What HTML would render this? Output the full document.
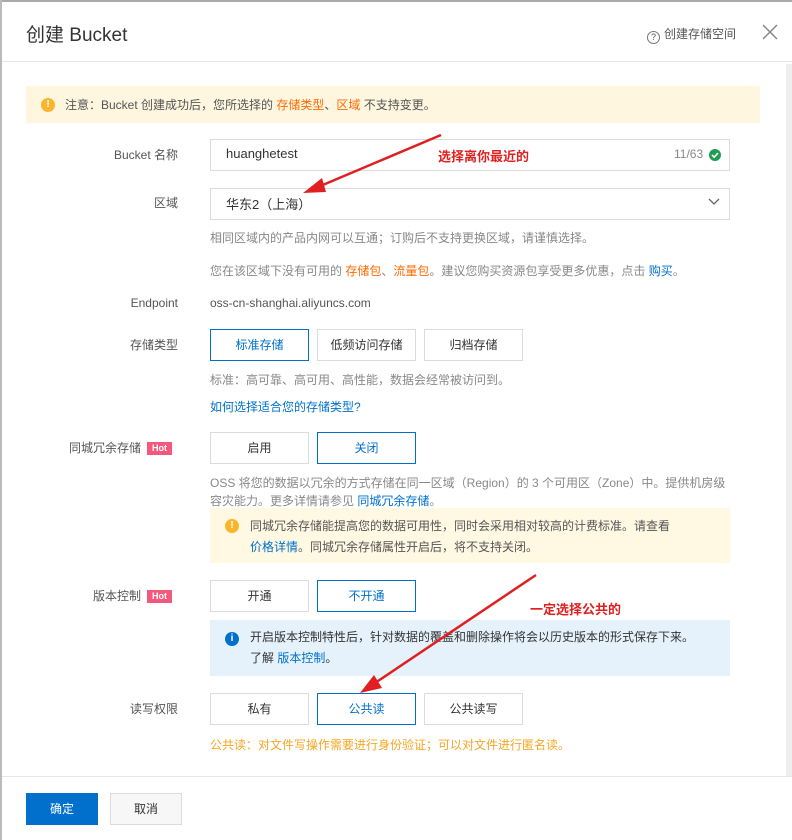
<!DOCTYPE html>
<html><head><meta charset="utf-8"><style>
*{box-sizing:border-box;margin:0;padding:0}
body{width:792px;height:840px;background:#fff;font-family:"Liberation Sans","Noto Sans CJK SC",sans-serif;font-size:12px;color:#333;position:relative;overflow:hidden}
.a{position:absolute}
.lbl{position:absolute;right:614px;text-align:right;color:#555;font-size:12px;white-space:nowrap}
.btn{position:absolute;width:99px;height:32px;border:1px solid #dcdcdc;text-align:center;line-height:30px;color:#333;background:#fff}
.sel{border-color:#0070cc;color:#0070cc}
.hint{position:absolute;left:210px;color:#888;font-size:12px;white-space:nowrap}
.o{color:#ff6a00}.b{color:#0070cc}
.hot{display:inline-block;background:#f5587b;color:#fff;font-size:9px;font-weight:bold;padding:0 5px;height:13px;line-height:13px;margin-left:6px;vertical-align:1px}
</style></head><body>
<div class="a" style="left:0;top:0;width:792px;height:2px;background:#aaa"></div>
<div class="a" style="left:0;top:0;width:2px;height:840px;background:#bbb"></div>
<div class="a" style="left:26px;top:20px;font-size:19px;color:#333">创建 Bucket</div>
<div class="a" style="left:647px;top:25px;font-size:12px;color:#555"><span style="display:inline-block;width:13px;height:13px;border:1px solid #777;border-radius:50%;font-size:9px;line-height:11px;text-align:center;margin-right:4px;vertical-align:-2px">?</span>创建存储空间</div>
<svg class="a" style="left:762px;top:24px" width="16" height="16"><path d="M1 1L15 15M15 1L1 15" stroke="#888" stroke-width="1.5"/></svg>
<div class="a" style="left:2px;top:61px;width:790px;height:1px;background:#e5e5e5"></div>
<div class="a" style="left:786px;top:64px;width:6px;height:712px;background:#eee"></div>
<div class="a" style="left:26px;top:86px;width:734px;height:37px;background:#fff6e0"></div>
<div class="a" style="left:41px;top:98px;width:14px;height:14px;border-radius:50%;background:#f8b62d;color:#fff;font-size:10px;font-weight:bold;text-align:center;line-height:14px">!</div>
<div class="a" style="left:65px;top:96px;color:#555">注意：Bucket 创建成功后，您所选择的 <span class="o">存储类型</span>、<span class="o">区域</span> 不支持变更。</div>

<div class="lbl" style="top:146px">Bucket 名称</div>
<div class="a" style="left:210px;top:139px;width:520px;height:32px;border:1px solid #dcdcdc"></div>
<div class="a" style="left:226px;top:146px;font-size:13px;color:#333">huanghetest</div>
<div class="a" style="left:674px;top:147px;color:#888">11/63</div>
<div class="a" style="left:709px;top:149px;width:12px;height:12px;border-radius:50%;background:#1e9e50"></div>
<svg class="a" style="left:709px;top:149px" width="12" height="12"><path d="M3 6L5.2 8.2L9 4" stroke="#fff" stroke-width="1.6" fill="none"/></svg>
<div class="a" style="left:438px;top:146px;color:#e02020;font-weight:bold;font-size:13px">选择离你最近的</div>

<div class="lbl" style="top:194px">区域</div>
<div class="a" style="left:210px;top:188px;width:520px;height:32px;border:1px solid #dcdcdc"></div>
<div class="a" style="left:226px;top:194px;font-size:13px">华东2（上海）</div>
<svg class="a" style="left:708px;top:198px" width="12" height="8"><path d="M1 1L6 6L11 1" stroke="#666" stroke-width="1.3" fill="none"/></svg>
<div class="hint" style="top:229px">相同区域内的产品内网可以互通；订购后不支持更换区域，请谨慎选择。</div>
<div class="hint" style="top:262px">您在该区域下没有可用的 <span class="o">存储包</span>、<span class="o">流量包</span>。建议您购买资源包享受更多优惠，点击 <span class="b">购买</span>。</div>
<div class="lbl" style="top:296px">Endpoint</div>
<div class="a" style="left:210px;top:296px;color:#555;font-size:12px">oss-cn-shanghai.aliyuncs.com</div>

<div class="lbl" style="top:336px">存储类型</div>
<div class="btn sel" style="left:210px;top:329px">标准存储</div>
<div class="btn" style="left:317px;top:329px">低频访问存储</div>
<div class="btn" style="left:424px;top:329px">归档存储</div>
<div class="hint" style="top:371px">标准：高可靠、高可用、高性能，数据会经常被访问到。</div>
<div class="hint b" style="top:398px;color:#0070cc">如何选择适合您的存储类型?</div>

<div class="lbl" style="top:439px;right:620px">同城冗余存储<span class="hot">Hot</span></div>
<div class="btn" style="left:210px;top:432px">启用</div>
<div class="btn sel" style="left:317px;top:432px">关闭</div>
<div class="hint" style="top:474px">OSS 将您的数据以冗余的方式存储在同一区域（Region）的 3 个可用区（Zone）中。提供机房级</div>
<div class="hint" style="top:492px">容灾能力。更多详情请参见 <span class="b">同城冗余存储</span>。</div>
<div class="a" style="left:210px;top:508px;width:520px;height:55px;background:#fff8e3"></div>
<div class="a" style="left:225px;top:519px;width:14px;height:14px;border-radius:50%;background:#f8b62d;color:#fff;font-size:10px;font-weight:bold;text-align:center;line-height:14px">!</div>
<div class="a" style="left:250px;top:516px;color:#555;line-height:21px">同城冗余存储能提高您的数据可用性，同时会采用相对较高的计费标准。请查看<br><span class="b">价格详情</span>。同城冗余存储属性开启后，将不支持关闭。</div>

<div class="lbl" style="top:587px;right:620px">版本控制<span class="hot">Hot</span></div>
<div class="btn" style="left:210px;top:580px">开通</div>
<div class="btn sel" style="left:317px;top:580px">不开通</div>
<div class="a" style="left:530px;top:599px;color:#e02020;font-weight:bold;font-size:13px">一定选择公共的</div>
<div class="a" style="left:210px;top:620px;width:520px;height:56px;background:#e5f2fc"></div>
<div class="a" style="left:225px;top:632px;width:14px;height:14px;border-radius:50%;background:#0070cc;color:#fff;font-size:10px;font-weight:bold;text-align:center;line-height:14px">i</div>
<div class="a" style="left:250px;top:627px;color:#333;line-height:21px">开启版本控制特性后，针对数据的覆盖和删除操作将会以历史版本的形式保存下来。<br>了解 <span class="b">版本控制</span>。</div>

<div class="lbl" style="top:700px">读写权限</div>
<div class="btn" style="left:210px;top:693px">私有</div>
<div class="btn sel" style="left:317px;top:693px">公共读</div>
<div class="btn" style="left:424px;top:693px">公共读写</div>
<div class="a" style="left:210px;top:736px;color:#f5a623">公共读：对文件写操作需要进行身份验证；可以对文件进行匿名读。</div>

<div class="a" style="left:2px;top:776px;width:790px;height:1px;background:#e5e5e5"></div>
<div class="a" style="left:26px;top:793px;width:72px;height:32px;background:#0070cc;color:#fff;text-align:center;line-height:32px">确定</div>
<div class="a" style="left:110px;top:793px;width:72px;height:32px;border:1px solid #dcdcdc;background:#f7f7f7;text-align:center;line-height:30px">取消</div>

<svg class="a" style="left:0;top:0" width="792" height="840">
<path d="M441 135L318 187" stroke="#e02020" stroke-width="2.5"/>
<path d="M303 193L322 178L326 192Z" fill="#e02020"/>
<path d="M536 575L372 685" stroke="#e02020" stroke-width="2.5"/>
<path d="M360 693L374 675L382 688Z" fill="#e02020"/>
</svg>
</body></html>
